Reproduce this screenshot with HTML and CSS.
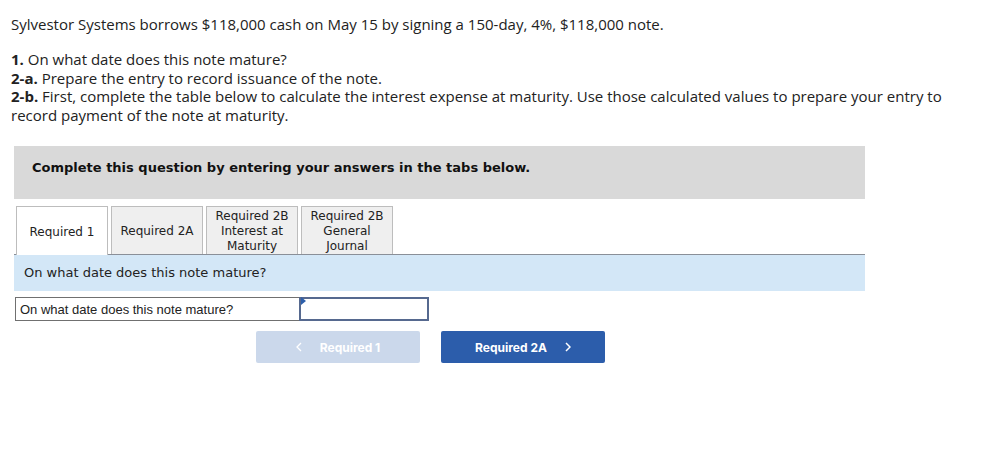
FILE: index.html
```html
<!DOCTYPE html>
<html>
<head>
<meta charset="utf-8">
<link rel="stylesheet" href="styles.css">
</head>
<body>
<div class="page">
  <p class="intro">Sylvestor Systems borrows $118,000 cash on May 15 by signing a 150-day, 4%, $118,000 note.</p>
  <div class="reqs">
    <p><b>1.</b> On what date does this note mature?</p>
    <p><b>2-a.</b> Prepare the entry to record issuance of the note.</p>
    <p><b>2-b.</b> First, complete the table below to calculate the interest expense at maturity. Use those calculated values to prepare your entry to record payment of the note at maturity.</p>
  </div>
  <div class="banner">Complete this question by entering your answers in the tabs below.</div>
  <div class="tabs">
    <div class="tab active">Required 1</div>
    <div class="tab">Required 2A</div>
    <div class="tab">Required 2B<br>Interest at<br>Maturity</div>
    <div class="tab">Required 2B<br>General<br>Journal</div>
  </div>
  <div class="question">On what date does this note mature?</div>
  <div class="answer-row">
    <div class="label-cell">On what date does this note mature?</div>
    <div class="input-cell"><span class="flag"></span></div>
  </div>
  <div class="nav">
    <div class="btn prev"><svg class="chev left" width="6" height="10" viewBox="0 0 6 10"><path d="M5 1 L1 5 L5 9" fill="none" stroke="#fff" stroke-width="1.3"/></svg>Required 1</div>
    <div class="btn next">Required 2A<svg class="chev right" width="6" height="10" viewBox="0 0 6 10"><path d="M1 1 L5 5 L1 9" fill="none" stroke="#fff" stroke-width="1.5"/></svg></div>
  </div>
</div>
</body>
</html>
```

FILE: styles.css
```css
html, body {
  margin: 0;
  padding: 0;
  background: #fff;
}
.page {
  padding: 14px 0 0 11px;
  font-family: "Open Sans", "Liberation Sans", sans-serif;
  color: #222;
}
.intro {
  margin: 0;
  font-size: 15px;
  line-height: 20px;
}
.reqs {
  margin-top: 16px;
  width: 940px;
  font-size: 15px;
  line-height: 18.5px;
}
.reqs p {
  margin: 0;
}
.reqs b {
  line-height: 1;
}
.banner {
  margin: 22px 0 0 3px;
  width: 851px;
  height: 53px;
  box-sizing: border-box;
  background: #d9d9d9;
  padding: 14px 0 0 18px;
  font-family: "DejaVu Sans", Verdana, sans-serif;
  font-weight: bold;
  font-size: 13px;
  color: #111;
}
.tabs {
  display: flex;
  gap: 3px;
  margin: 7px 0 0 5px;
  position: relative;
  z-index: 1;
}
.tab {
  width: 92px;
  height: 48px;
  box-sizing: border-box;
  border: 1px solid #bdbdbd;
  border-bottom: none;
  background: #efefef;
  padding-top: 2px;
  display: flex;
  align-items: center;
  justify-content: center;
  text-align: center;
  font-family: "DejaVu Sans", Verdana, sans-serif;
  font-size: 12px;
  line-height: 15px;
  color: #222;
}
.tab.active {
  background: #fff;
  height: 49px;
  margin-bottom: -1px;
}
.question {
  margin-left: 3px;
  width: 851px;
  height: 37px;
  box-sizing: border-box;
  border-top: 1px solid #8a8f98;
  background: #d3e7f7;
  padding: 10px 0 0 10px;
  font-family: "DejaVu Sans", Verdana, sans-serif;
  font-size: 13px;
  color: #222;
}
.answer-row {
  display: flex;
  margin: 6px 0 0 4px;
  height: 24px;
}
.label-cell {
  width: 284px;
  box-sizing: border-box;
  border: 1px solid #707070;
  border-right: none;
  padding: 4px 0 0 4px;
  font-family: "Liberation Sans", Arial, sans-serif;
  font-size: 13px;
  color: #222;
}
.input-cell {
  width: 130px;
  box-sizing: border-box;
  border: 2px solid #56698f;
  position: relative;
}
.flag {
  position: absolute;
  left: 0;
  top: -2px;
  width: 0;
  height: 0;
  border-top: 4px solid transparent;
  border-bottom: 4px solid transparent;
  border-left: 5px solid #2d5fab;
}
.nav {
  display: flex;
  gap: 21px;
  margin: 10px 0 0 245px;
}
.btn {
  width: 164px;
  height: 32px;
  border-radius: 2px;
  display: flex;
  align-items: center;
  justify-content: center;
  font-family: "Inter", "Liberation Sans", sans-serif;
  font-weight: 700;
  font-size: 12px;
  color: #fff;
}
.btn.prev {
  background: #cbd8eb;
}
.btn.next {
  background: #2c5dab;
}
.chev.left {
  margin-right: 18px;
}
.chev.right {
  margin-left: 18px;
}
```
